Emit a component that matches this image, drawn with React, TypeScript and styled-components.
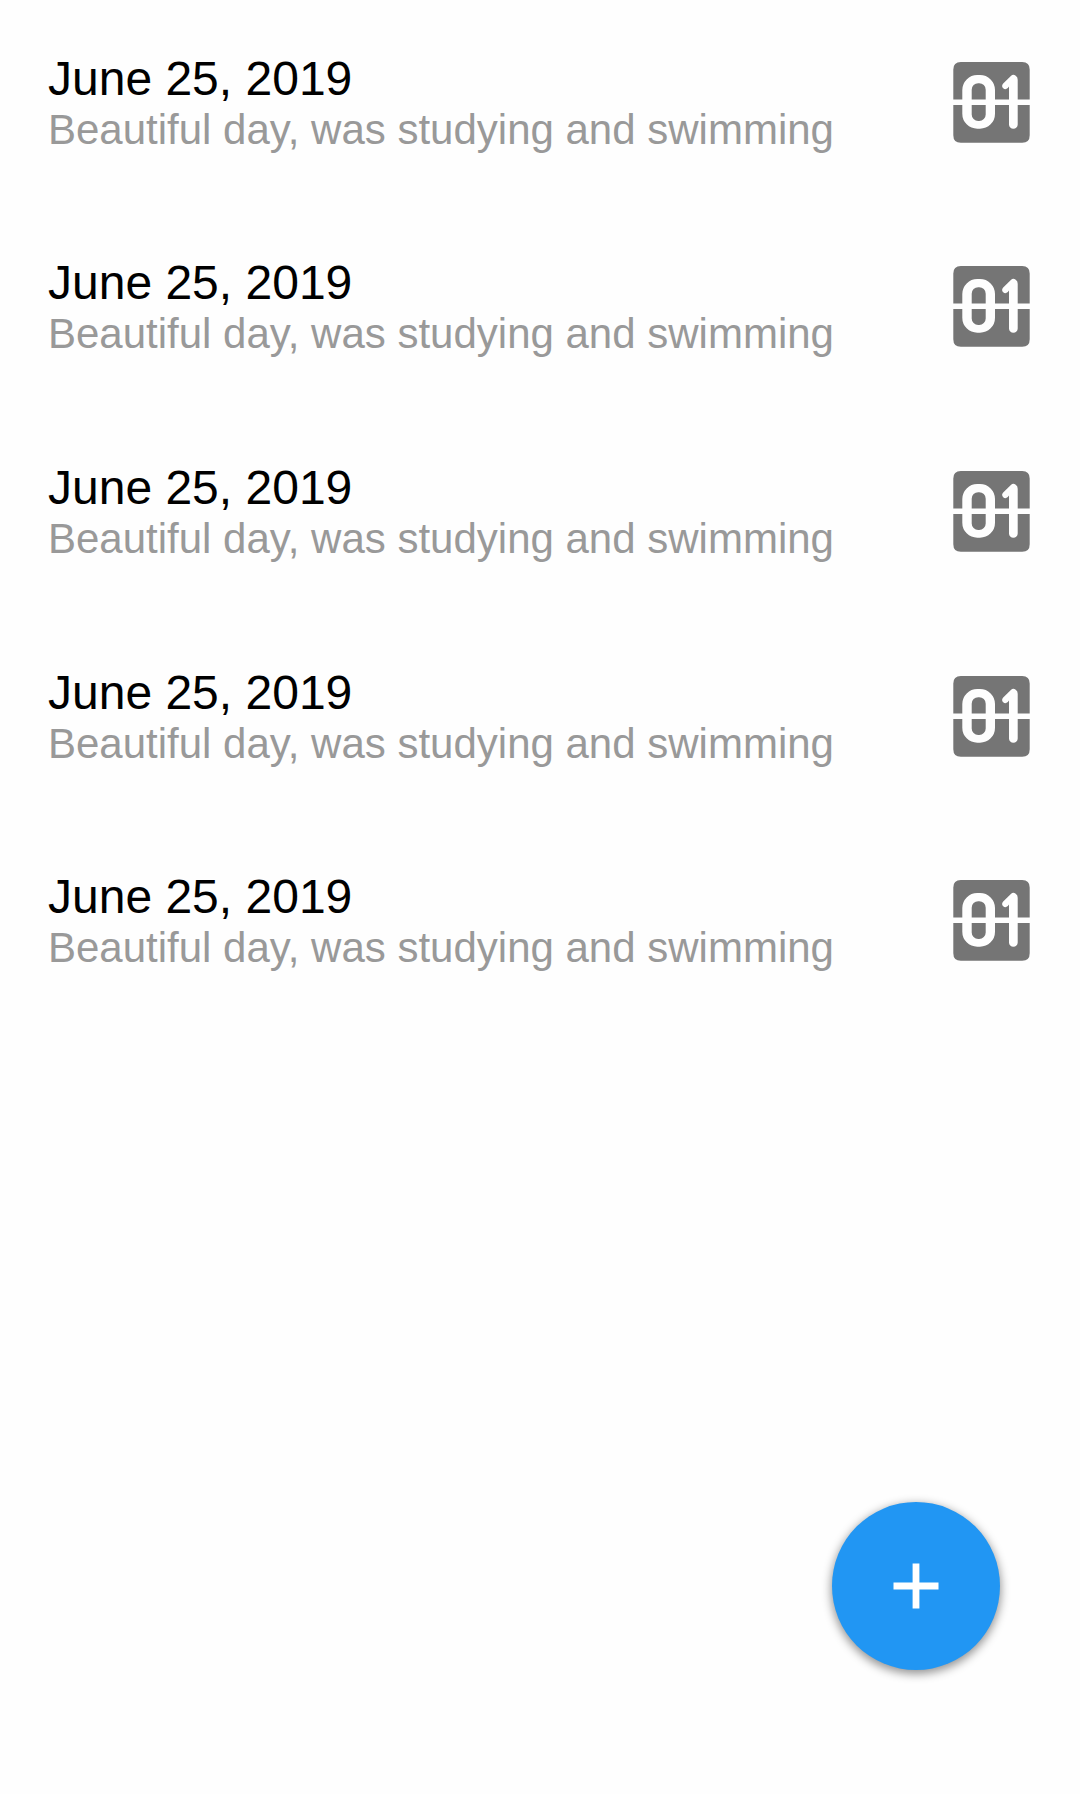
import React from "react";
import styled, { createGlobalStyle } from "styled-components";

const GlobalStyle = createGlobalStyle`
  body {
    margin: 0;
    background: #fefefe;
    font-family: "Liberation Sans", Arial, sans-serif;
  }
`;

const Screen = styled.main`
  box-sizing: border-box;
  position: relative;
  width: 1080px;
  height: 1794px;
  overflow: hidden;
  background: #fefefe;
`;

const EntryList = styled.ul`
  margin: 0;
  padding: 0;
  list-style: none;
`;

const Entry = styled.li`
  box-sizing: border-box;
  display: flex;
  align-items: flex-start;
  justify-content: space-between;
  height: 204.66px;
  padding: 50.6px 50px 0 48px;
`;

const EntryText = styled.div`
  display: flex;
  flex-direction: column;
`;

const EntryDate = styled.span`
  font-size: 48px;
  line-height: 55px;
  color: #000;
`;

const EntryNote = styled.span`
  font-size: 42px;
  line-height: 48px;
  color: #999;
`;

const Counter = styled.svg`
  display: block;
  width: 77px;
  height: 81px;
  margin-top: 11px;
`;

const AddButton = styled.button`
  position: absolute;
  right: 80px;
  bottom: 124px;
  display: flex;
  align-items: center;
  justify-content: center;
  width: 168px;
  height: 168px;
  padding: 0;
  border: 0;
  border-radius: 50%;
  background: #2196f3;
  box-shadow: 0 3px 10px 1px rgba(0, 0, 0, 0.42);
`;

const Plus = styled.svg`
  display: block;
`;

function CounterIcon() {
  return (
    <Counter viewBox="0 0 77 81">
      <path
        d="M0.3 37.6V7.5Q0.3 0 7.8 0H69.2Q76.7 0 76.7 7.5V37.6ZM0.3 43H76.7V73.2Q76.7 80.7 69.2 80.7H7.8Q0.3 80.7 0.3 73.2Z"
        fill="#757575"
      />
      <path
        d="M24.3 13H27A15 15 0 0 1 42 28V51.7A15 15 0 0 1 27 66.7H24.3A15 15 0 0 1 9.3 51.7V28A15 15 0 0 1 24.3 13ZM25.2 21.2A6.5 6.5 0 0 0 18.7 27.7V52.5A6.5 6.5 0 0 0 25.2 59H26.2A6.5 6.5 0 0 0 32.7 52.5V27.7A6.5 6.5 0 0 0 26.2 21.2Z"
        fill="#fefefe"
        fillRule="evenodd"
      />
      <path
        d="M56 24.6L54.8 26Q52.5 28.2 50.2 26.2Q48 23.9 50.2 21.4L57.6 14.2Q60 12 62.4 13.4Q64.7 14.8 64.7 17.8V62.4A4.35 4.35 0 0 1 56 62.4Z"
        fill="#fefefe"
      />
    </Counter>
  );
}

const entries = Array.from({ length: 5 }, (_, id) => ({
  id,
  date: "June 25, 2019",
  note: "Beautiful day, was studying and swimming",
}));

export default function App() {
  return (
    <Screen>
      <GlobalStyle />
      <EntryList>
        {entries.map((entry) => (
          <Entry key={entry.id}>
            <EntryText>
              <EntryDate>{entry.date}</EntryDate>
              <EntryNote>{entry.note}</EntryNote>
            </EntryText>
            <CounterIcon />
          </Entry>
        ))}
      </EntryList>
      <AddButton aria-label="Add entry">
        <Plus width="46" height="46" viewBox="0 0 46 46">
          <path d="M0.5 19.6H19.6V0.5H26.4V19.6H45.5V26.4H26.4V45.5H19.6V26.4H0.5Z" fill="#fff" />
        </Plus>
      </AddButton>
    </Screen>
  );
}
